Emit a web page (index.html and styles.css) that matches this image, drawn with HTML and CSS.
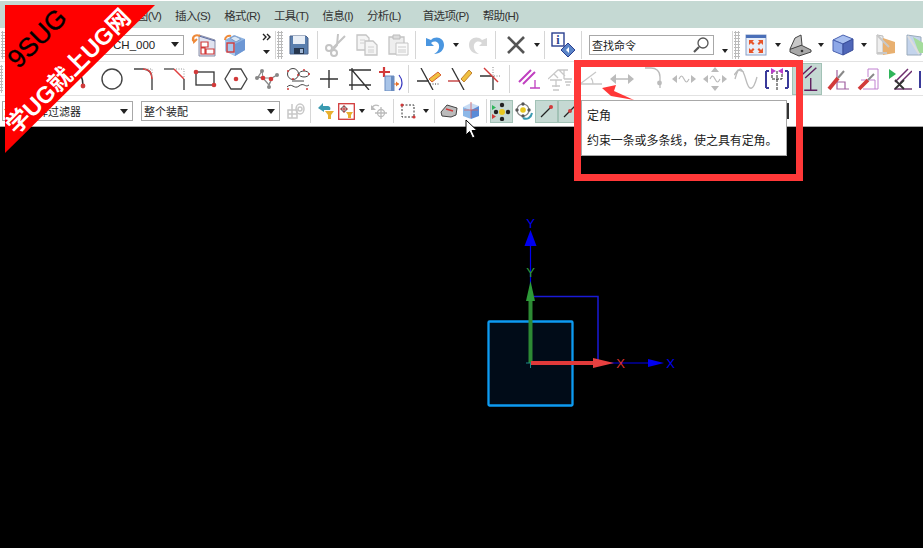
FILE: index.html
```html
<!DOCTYPE html>
<html lang="zh">
<head>
<meta charset="utf-8">
<title>NX</title>
<link rel="stylesheet" href="styles.css">
</head>
<body>
<div class="app">
  <nav class="menu">
    <span class="mi first">视图(V)</span>
    <span class="mi">插入(S)</span>
    <span class="mi">格式(R)</span>
    <span class="mi">工具(T)</span>
    <span class="mi">信息(I)</span>
    <span class="mi">分析(L)</span>
    <span class="mi wide">首选项(P)</span>
    <span class="mi">帮助(H)</span>
  </nav>

  <div class="tb r1">
    <i class="grip"></i>
    <div class="combo c-sketch"><span>SKETCH_000</span><b class="tri"></b></div>
    <span class="ic ml4"><svg width="26" height="24" viewBox="0 0 26 24"><path d="M8 2 24 7V23H8Z" fill="#dfe3f0" stroke="#8a8fa8"/><path d="M8 3 24 8" stroke="#5a6aa0"/><path d="M10 9h7v5h-7zM10 15h4v6h-4zM15 16h8v5h-8z" fill="#fff" stroke="#d23a3a" stroke-width="1.2"/><path d="M2 8C1 3 5 1 9 3M2 4l1 5 3-3" fill="none" stroke="#ee8a3a" stroke-width="2"/></svg></span>
    <span class="ic"><svg width="26" height="24" viewBox="0 0 26 24"><path d="M3 7 12 2l11 4v11l-10 6-10-5Z" fill="#8fb4e2"/><path d="M3 7l10 4 10-5v11l-10 6Z" fill="#6d97d4"/><path d="M13 11v12L3 18V7Z" fill="#a9c8ec"/><path d="M8 5l5-2 6 3-5 3Z" fill="#dbe7f5" stroke="#7d9cc8"/><rect x="5" y="10" width="7" height="9" fill="none" stroke="#d23a3a" stroke-width="1.4"/><path d="M3 7c0-3 3-5 6-4" fill="none" stroke="#ee8a3a" stroke-width="2"/></svg></span>
    <span class="chev ml10"><svg width="14" height="26" viewBox="0 0 14 26"><path d="M3 2l3 3-3 3M7 2l3 3-3 3" fill="none" stroke="#222" stroke-width="1.4"/><path d="M3 18h7l-3.500 4Z" fill="#222"/></svg></span>
    <i class="sep ml1"></i>
    <i class="grip g2"></i>
    <span class="ic"><svg width="22" height="22" viewBox="0 0 22 22"><path d="M2 2h16l2 2v16H2Z" fill="#5a7fae" stroke="#4a628a"/><path d="M5 2h12v8H5Z" fill="#e8eef6"/><path d="M6 14h10v6H6Z" fill="#26364e"/><rect x="12" y="15" width="3" height="4" fill="#9fb6d4"/></svg></span>
    <i class="sep ml3"></i>
    <span class="ic ml2"><svg width="26" height="24" viewBox="0 0 26 24"><g fill="none" stroke="#c4c4c4" stroke-width="2"><path d="M22 3 10 15M15 1 14 12l-4 5"/><circle cx="6" cy="15" r="3"/><circle cx="11" cy="20" r="3"/></g></svg></span>
    <span class="ic"><svg width="24" height="24" viewBox="0 0 24 24"><g fill="#f5f5f5" stroke="#c4c4c4" stroke-width="1.3"><path d="M2 2h9l3 3v12H2Z"/><path d="M10 8h8l4 4v10H10Z"/></g><path d="M5 7h5M5 10h4M13 14h6M13 17h6M13 19h6" stroke="#d0d0d0"/></svg></span>
    <span class="ic"><svg width="22" height="24" viewBox="0 0 22 24"><path d="M2 4h15v17H2Z" fill="#eee" stroke="#c4c4c4" stroke-width="1.300"/><path d="M6 2h7v4H6Z" fill="#ddd" stroke="#bbb"/><path d="M9 10h12v12H9Z" fill="#fafafa" stroke="#c4c4c4"/><path d="M11 14h8M11 17h8M11 19h8" stroke="#ccc"/></svg></span>
    <i class="sep ml2"></i>
    <span class="ic ml3"><svg width="22" height="22" viewBox="0 0 22 22"><path d="M2 4v8h8L7 9c4-3 9-1 8 5-.5 3-3 5-5 6 6 0 10-4 10-9 0-7-8-10-13-5Z" fill="#4a96e0"/></svg></span>
    <span class="dd"></span>
    <span class="ic"><svg width="22" height="22" viewBox="0 0 22 22"><path d="M20 4v8h-8l3-3c-4-3-9-1-8 5 .5 3 3 5 5 6-6 0-10-4-10-9C2 4 10 1 15 6Z" fill="#d8d8d8"/></svg></span>
    <i class="sep ml2"></i>
    <span class="ic ml4"><svg width="20" height="18" viewBox="0 0 20 18"><path d="M2 1l16 16M18 1 2 17" stroke="#555" stroke-width="2.600"/></svg></span>
    <span class="dd"></span>
    <i class="sep ml1"></i>
    <span class="ic ml2"><svg width="26" height="26" viewBox="0 0 26 26"><rect x="2" y="1" width="12" height="13" fill="#fff" stroke="#2a3f8f" stroke-width="1.400"/><text x="8" y="12" class="glyph-i">i</text><path d="M18 11l7 7-7 7-7-7Z" fill="#5a84c8" stroke="#2a3f8f"/><path d="M16 18l3-3v6Z" fill="#fff"/></svg></span>
    <i class="sep ml3"></i>
    <div class="search ml7"><span>查找命令</span><svg width="18" height="18" viewBox="0 0 18 18"><circle cx="11" cy="7" r="5" fill="#fff" stroke="#555" stroke-width="1.300"/><path d="M7 11 2 16" stroke="#555" stroke-width="2.200"/></svg></div>
    <span class="dd ml5 low"></span>
    <i class="sep ml1"></i>
    <i class="grip g2"></i>
    <span class="ic"><svg width="22" height="22" viewBox="0 0 22 22"><rect x="1" y="1" width="20" height="20" fill="#e8eef8" stroke="#8aa0c8"/><rect x="1" y="1" width="20" height="3" fill="#4a6fb8"/><path d="M4 6h5L7.500 7.500 9.500 9.500 8 11 6 9 4 11ZM18 6h-5l1.500 1.500-2 2L14 11l2-2 2 2ZM4 19h5l-1.500-1.500 2-2L8 14l-2 2-2-2ZM18 19h-5l1.500-1.500-2-2L14 14l2 2 2-2Z" fill="#e8552a"/></svg></span>
    <span class="dd ml1"></span>
    <span class="ic"><svg width="24" height="24" viewBox="0 0 24 24"><path d="M2 16 13 12l10 5v2L11 23 2 19Z" fill="#a8a8a8" stroke="#444"/><path d="M2 16 7 5l6-3 1 10L3 16Z" fill="#c8c8c8" stroke="#444"/><circle cx="14" cy="18" r="1.300" fill="#333"/></svg></span>
    <span class="dd"></span>
    <span class="ic"><svg width="24" height="22" viewBox="0 0 24 22"><path d="M2 6 12 1l10 4-10 5Z" fill="#a8bff0" stroke="#4a62b0"/><path d="M2 6l10 4v11L2 17Z" fill="#8ea8e8" stroke="#4a62b0"/><path d="M12 10l10-5v11l-10 5Z" fill="#4f66b8" stroke="#3a4c98"/></svg></span>
    <span class="dd"></span>
    <span class="ic"><svg width="22" height="24" viewBox="0 0 22 24"><path d="M2 2 8 3v18H2Z" fill="#eee" stroke="#bbb"/><path d="M8 5 20 9v11l-12 2Z" fill="#e8b070"/><path d="M2 2l12 12M2 20h10" stroke="#c8c8c8" stroke-width="2"/></svg></span>
    <span class="ic"><svg width="24" height="24" viewBox="0 0 24 24"><path d="M2 2 16 4v18H2Z" fill="#c4d4ec" stroke="#9ab"/><path d="M8 4l14 8v8H14Z" fill="#a4dc9c"/><path d="M3 3l11 18" stroke="#ddd" stroke-width="2"/></svg></span>
  </div>

  <div class="tb r2">
    <i class="grip"></i>
    <span class="ic"><svg width="22" height="22" viewBox="0 0 22 22"><path d="M2 20 20 2" stroke="#333" stroke-width="1.500"/></svg></span>
    <span class="ic"><svg width="22" height="22" viewBox="0 0 22 22"><path d="M2 20 20 2" stroke="#333" stroke-width="1.500"/></svg></span>
    <span class="ic"><svg width="20" height="24" viewBox="0 0 20 24"><path d="M4 3c5 2 8 8 8 16" fill="none" stroke="#333" stroke-width="1.500"/><circle cx="12" cy="19" r="2.400" fill="#d23a3a"/></svg></span>
    <span class="ic"><svg width="22" height="22" viewBox="0 0 22 22"><circle cx="11" cy="11" r="10" fill="none" stroke="#444" stroke-width="1.400"/></svg></span>
    <span class="ic"><svg width="22" height="24" viewBox="0 0 22 24"><path d="M2 2h9c6 0 9 4 9 10" fill="none" stroke="#444" stroke-width="1.300"/><path d="M11 2c6 0 9 4 9 10" fill="none" stroke="#e04040" stroke-width="1.400"/><path d="M20 12v11" stroke="#333" stroke-width="1.300"/><path d="M13 2h7v8" fill="none" stroke="#999" stroke-dasharray="1 1.500"/></svg></span>
    <span class="ic"><svg width="24" height="24" viewBox="0 0 24 24"><path d="M2 2h10" stroke="#444" stroke-width="1.300"/><path d="M12 2l10 10" stroke="#e04040" stroke-width="1.500"/><path d="M22 12v11" stroke="#333" stroke-width="1.300"/><path d="M14 2h8v8" fill="none" stroke="#999" stroke-dasharray="1 1.500"/></svg></span>
    <span class="ic"><svg width="24" height="22" viewBox="0 0 24 22"><rect x="3" y="4" width="18" height="13" fill="none" stroke="#333" stroke-width="1.300"/><circle cx="3" cy="4" r="2.300" fill="#d23a3a"/><circle cx="21" cy="17" r="2.300" fill="#d23a3a"/></svg></span>
    <span class="ic"><svg width="24" height="22" viewBox="0 0 24 22"><path d="M7 1h10l6 10-6 10H7L1 11Z" fill="none" stroke="#444" stroke-width="1.300"/><circle cx="12" cy="11" r="2.300" fill="#d23a3a"/></svg></span>
    <span class="ic"><svg width="24" height="22" viewBox="0 0 24 22"><path d="M7 3 3 9l5 1 6 7 3-7 5-3" fill="none" stroke="#888" stroke-width="1.300"/><path d="M7 3l1 7 9 0-3 7" fill="none" stroke="#888"/><circle cx="7" cy="3" r="2" fill="#888"/><circle cx="2" cy="10" r="2" fill="#888"/><circle cx="22" cy="7" r="2" fill="#888"/><circle cx="14" cy="19" r="2" fill="#888"/><circle cx="8" cy="10" r="2.300" fill="#d23a3a"/><circle cx="16" cy="11" r="2.300" fill="#d23a3a"/></svg></span>
    <span class="ic"><svg width="24" height="24" viewBox="0 0 24 24"><g fill="none" stroke="#444"><circle cx="7" cy="7" r="5.500"/><ellipse cx="18" cy="7" rx="5" ry="3"/><path d="M6 14h12M1 20c5-5 7 3 12-1s6 2 10-1"/></g><g fill="#d23a3a"><circle cx="2" cy="4" r="1"/><circle cx="12" cy="8" r="1"/><circle cx="7" cy="12" r="1"/><circle cx="18" cy="3" r="1"/><circle cx="23" cy="7" r="1"/><circle cx="2" cy="22" r="1"/><circle cx="21" cy="22" r="1"/></g></svg></span>
    <span class="ic"><svg width="18" height="18" viewBox="0 0 18 18"><path d="M0 9h18M9 0v18" stroke="#333" stroke-width="1.400"/></svg></span>
    <span class="ic"><svg width="22" height="22" viewBox="0 0 22 22"><path d="M0 2h22M0 17h22M3 0v22M3 2l17 20" stroke="#333" stroke-width="1.300" fill="none"/></svg></span>
    <span class="ic"><svg width="24" height="24" viewBox="0 0 24 24"><path d="M5 0v10M0 5h11" stroke="#d23a3a" stroke-width="2.200"/><path d="M6 9h9v15H6Z" fill="#a8c4e8" stroke="#6a8cc0"/><path d="M12 9h3v15h-3Z" fill="#6a8cc0"/><path d="M15 17h5" stroke="#e8712a"/><path d="M17 14.500l3 2.500-3 2.500Z" fill="#e8712a"/><path d="M20 8c4 5 4 11 0 15" fill="none" stroke="#3a3ac0" stroke-width="1.200"/></svg></span>
    <i class="sep r2s"></i>
    <span class="ic ml1"><svg width="24" height="22" viewBox="0 0 24 22"><path d="M4 0 16 22M0 13h12" stroke="#333" stroke-width="1.300"/><path d="M13 16h9" stroke="#333" stroke-dasharray="1 1.500"/><path d="M12 11l9-7 3 3-9 7Z" fill="#f0c040" stroke="#d86030"/></svg></span>
    <span class="ic"><svg width="24" height="22" viewBox="0 0 24 22"><path d="M4 0 16 22" stroke="#333" stroke-width="1.300"/><path d="M0 13h12" stroke="#c03030" stroke-width="1.300"/><path d="M13 11l8-9 3 3-8 9Z" fill="#f0c040" stroke="#c08030"/></svg></span>
    <span class="ic"><svg width="22" height="24" viewBox="0 0 22 24"><path d="M0 9h12M13 9v14" stroke="#333" stroke-width="1.300"/><path d="M4 1l14 14" stroke="#d23a3a" stroke-width="1.400"/><path d="M13 0v9h8" fill="none" stroke="#888" stroke-dasharray="1 1.500"/></svg></span>
    <i class="sep r2s wide"></i>
    <span class="ic"><svg width="22" height="20" viewBox="0 0 22 20"><path d="M1 13 13 1M5 15 17 3" stroke="#c040c0" stroke-width="2"/><path d="M12 19h10M17 11v8" stroke="#c040c0" stroke-width="1.300"/></svg></span>
    <span class="ic"><svg width="24" height="24" viewBox="0 0 24 24"><g fill="none" stroke="#c8c8c8" stroke-width="1.300"><path d="M0 12 10 3h10M11 3l6 6M6 7l4 4M16 3v9M2 13h12M5 23h6M8 13v7M4 19h8M16 12h8M17 15h6M18 18h4"/></g></svg></span>
    <span class="ic"><svg width="22" height="18" viewBox="0 0 22 18"><path d="M0 14 16 2M0 14h22M13 14c0-3-1-5-2-6" fill="none" stroke="#c8c8c8" stroke-width="1.300"/></svg></span>
    <span class="ic"><svg width="24" height="12" viewBox="0 0 24 12"><path d="M3 6h18" stroke="#bbb" stroke-width="1.500"/><path d="M0 6l6-5v10ZM24 6l-6-5v10Z" fill="#bbb"/></svg></span>
    <span class="ic"><svg width="18" height="24" viewBox="0 0 18 24"><path d="M1 1h6c5 0 9 3 9 9v11" fill="none" stroke="#bbb" stroke-width="1.300"/><circle cx="15.500" cy="16" r="2.400" fill="#bbb"/></svg></span>
    <span class="ic"><svg width="24" height="12" viewBox="0 0 24 12"><path d="M7 6c2-4 3-4 5 0s3 4 5 0" fill="none" stroke="#bbb" stroke-width="1.200"/><path d="M0 6l5-4v8ZM24 6l-5-4v8Z" fill="#bbb"/></svg></span>
    <span class="ic"><svg width="24" height="24" viewBox="0 0 24 24"><path d="M7 12c2-4 3-4 5 0s3 4 5 0" fill="none" stroke="#bbb" stroke-width="1.200"/><path d="M0 12l5-4v8ZM24 12l-5-4v8ZM12 0l-4 5h8ZM12 24l-4-5h8Z" fill="#bbb"/></svg></span>
    <span class="ic"><svg width="24" height="24" viewBox="0 0 24 24"><path d="M1 12c4-16 8-10 11 1s7 12 11-3M0 8l4-5 6 2" fill="none" stroke="#bbb" stroke-width="1.300"/></svg></span>
    <span class="ic"><svg width="24" height="22" viewBox="0 0 24 22"><path d="M1 3v17M23 3v17M1 3h3M1 20h3M23 3h-3M23 20h-3" stroke="#3a3a9a" stroke-width="2" fill="none"/><path d="M7 3v8h10V3M12 3v19" stroke="#222" fill="none" stroke-dasharray="3 1"/><path d="M11 3 6 0v6ZM13 3l5-3v6Z" fill="#b83ec8"/></svg></span>
    <span class="active a2"><svg width="30" height="30" viewBox="0 0 30 30"><path d="M8 12 20 1M13 14 25 3" stroke="#5e1e5e" stroke-width="1.500"/><path d="M12 27h14M19 14v13" stroke="#5e1e5e" stroke-width="1.500"/></svg></span>
    <span class="ic"><svg width="22" height="24" viewBox="0 0 22 24"><path d="M10 3v19H22M10 15h8v7" fill="none" stroke="#a060a0" stroke-width="1.200"/><path d="M2 22 11 11" stroke="#d23a3a" stroke-width="3.800"/><path d="M11 11l6-7" stroke="#888" stroke-width="2"/></svg></span>
    <span class="ic"><svg width="24" height="24" viewBox="0 0 24 24"><path d="M11 2h10v20H6M11 2v8M4 13h14v9" fill="none" stroke="#c080d0"/><path d="M2 22 11 13" stroke="#d23a3a" stroke-width="3.800"/><path d="M11 13l6-6" stroke="#888" stroke-width="2"/></svg></span>
    <span class="ic"><svg width="24" height="24" viewBox="0 0 24 24"><path d="M1 2l7 5-7 5Z" fill="#2fb55a"/><path d="M7 15 20 2M12 16 24 4" stroke="#6e2e6e" stroke-width="1.500"/><path d="M6 22h18" stroke="#5e1e5e" stroke-width="1.300"/><path d="M7 13l9 9M16 13l-9 9" stroke="#333" stroke-width="1.800"/></svg></span>
    <span class="ic"><svg width="24" height="22" viewBox="0 0 24 22"><path d="M1 3v17M23 3v17" stroke="#3a3a9a" stroke-width="2"/></svg></span>
  </div>

  <div class="tb r3">
    <div class="combo c-filter"><span>没有选择过滤器</span><b class="tri"></b></div>
    <div class="combo c-scope"><span>整个装配</span><b class="tri"></b></div>
    <span class="ic3 ml4"><svg width="18" height="18" viewBox="0 0 18 18"><g fill="none" stroke="#c8c8c8" stroke-width="1.500"><path d="M1 8h9v8H1ZM5 2v14M1 12h9"/><ellipse cx="13" cy="7" rx="4" ry="5"/><circle cx="13" cy="7" r="2"/></g></svg></span>
    <i class="sep ml3"></i>
    <span class="ic2 ml5"><svg width="18" height="18" viewBox="0 0 18 18"><path d="M1 6 6 1v3h4c3 0 4 2 3 4H7v2Z" fill="#3a9ab0"/><path d="M8 9h9l-3 4v4h-3v-4Z" fill="#e8b030"/></svg></span>
    <span class="ic2"><svg width="17" height="17" viewBox="0 0 17 17"><rect x=".7" y=".7" width="15.600" height="15.600" fill="#fff" stroke="#d23a3a" stroke-width="1.300"/><circle cx="6" cy="6" r="2.500" fill="none" stroke="#555"/><path d="M6 2v8M2 6h8" stroke="#c03030"/><path d="M8 9h7l-2 3v3h-3v-3Z" fill="#e8b030"/></svg></span>
    <span class="dd"></span>
    <span class="ic2 ml1"><svg width="18" height="18" viewBox="0 0 18 18"><g fill="none" stroke="#bbb" stroke-width="1.300"><circle cx="11" cy="11" r="3.500"/><path d="M11 5v12M5 11h12M2 7c0-3 3-5 7-3"/></g><path d="M1 3v5h5Z" fill="#bbb"/></svg></span>
    <i class="sep ml4"></i>
    <span class="ic2 ml4"><svg width="16" height="16" viewBox="0 0 16 16"><rect x="2" y="2" width="12" height="12" fill="none" stroke="#333" stroke-dasharray="2 1.500"/><circle cx="2" cy="2" r="1.600" fill="#d23a3a"/><circle cx="14" cy="14" r="1.600" fill="#d23a3a"/></svg></span>
    <span class="dd ml2"></span>
    <i class="sep ml2"></i>
    <span class="ic2 ml4"><svg width="18" height="14" viewBox="0 0 18 14"><path d="M1 8 7 1l10 3-1 7-5 2-9-1Z" fill="#bbb" stroke="#444"/><path d="M6 5l7 2" stroke="#d23a3a" stroke-width="1.400"/></svg></span>
    <span class="ic2 ml2"><svg width="18" height="18" viewBox="0 0 18 18"><path d="M1 5 9 1l8 3-8 4Z" fill="#c8dcf4"/><path d="M1 5l8 3v9l-8-3Z" fill="#8cb8e8"/><path d="M9 8l8-4v10l-8 3Z" fill="#5a8cd8"/><path d="M9 0v16M2 8h14" stroke="#d86060" stroke-width=".8"/></svg></span>
    <i class="sep ml5"></i>
    <span class="active a3 ml3"><svg width="19" height="19" viewBox="0 0 19 19"><circle cx="10" cy="10" r="3" fill="#e8c820"/><g fill="#222"><circle cx="10" cy="3" r="2.200"/><circle cx="10" cy="17" r="2.200"/><circle cx="4" cy="10" r="2.200"/><circle cx="16" cy="10" r="2.200"/></g><path d="M0 3l4 2.500L0 8Z" fill="#2fb55a"/><path d="M0 12l4 2.500L0 17Z" fill="#d23a3a"/></svg></span>
    <span class="ic4"><svg width="18" height="18" viewBox="0 0 18 18"><circle cx="8" cy="8" r="2.800" fill="#e8c820"/><circle cx="8" cy="8" r="6" fill="none" stroke="#888" stroke-width="1.200"/><g fill="#555"><circle cx="8" cy="2" r="1.700"/><circle cx="8" cy="14" r="1.700"/><circle cx="2" cy="8" r="1.700"/><circle cx="14" cy="8" r="1.700"/></g><path d="M8 16c4 2 8 0 9-5" fill="none" stroke="#3a9ab0" stroke-width="2"/></svg></span>
    <span class="active a3"><svg width="14" height="14" viewBox="0 0 14 14"><path d="M1 13 11 3" stroke="#222" stroke-width="1.200"/><circle cx="11" cy="3" r="2" fill="#d23a3a"/></svg></span>
    <span class="active a3"><svg width="14" height="14" viewBox="0 0 14 14"><path d="M1 13 13 1" stroke="#222" stroke-width="1.200"/><circle cx="7" cy="7" r="2" fill="#d23a3a"/></svg></span>
    <i class="tail"></i>
  </div>

  <main class="canvas">
    <svg class="scene" width="923" height="421" viewBox="0 127 923 421">
      <rect x="488.500" y="321.500" width="84" height="84" fill="#010c18" stroke="#0d9bf2" stroke-width="2.300" rx="1"/>
      <path d="M534 296.500H598V360" fill="none" stroke="#1a1ad6" stroke-width="1.500"/>
      <path d="M530.500 363V240" stroke="#0000f0" stroke-width="1.200"/>
      <path d="M530.500 230 524.500 246H536.500Z" fill="#0000f0"/>
      <path d="M595 363H650" stroke="#0000f0" stroke-width="1.200"/>
      <path d="M648 359 664 363 648 367Z" fill="#0000f0"/>
      <text x="530.500" y="228" class="ax blue">Y</text>
      <text x="670.500" y="368" class="ax blue">X</text>
      <path d="M530.500 363V295" stroke="#2d8a34" stroke-width="4"/>
      <path d="M530.500 281 526 301H535Z" fill="#2d9a38"/>
      <text x="530.500" y="277" class="ax green">Y</text>
      <path d="M531 363H595" stroke="#e03a3a" stroke-width="4"/>
      <path d="M593 358 614 363 593 368Z" fill="#e84040"/>
      <text x="620.500" y="368" class="ax red">X</text>
      <path d="M526 363h5M530.500 363v5" stroke="#1a8a8a"/>
    </svg>
  </main>
</div>

<svg class="cursor" width="14" height="20" viewBox="0 0 14 20"><path d="M1 1V16L4.500 12.500 7.500 19 10 18 7 11.500H12Z" fill="#fff" stroke="#000"/></svg>

<div class="frame"></div>
<div class="tip">
  <p>定角</p>
  <p>约束一条或多条线，使之具有定角。</p>
</div>
<svg class="pointer" width="34" height="18" viewBox="0 0 34 18"><path d="M1 3 15 0 13 6 33 15 10 11Z" fill="#ff3838"/></svg>

<div class="banner">
  <span class="b-top">9SUG</span>
  <span class="b-main">学UG就上UG网</span>
</div>
</body>
</html>
```

FILE: styles.css
```css
* { box-sizing: border-box; }
html, body { margin: 0; height: 100%; overflow: hidden; }
body {
  background: #fff;
  font-family: "Liberation Sans", "Noto Sans CJK SC", sans-serif;
  font-size: 12px;
  color: #222;
}
.app { width: 923px; height: 548px; display: flex; flex-direction: column; padding-top: 1px; overflow: hidden; }

.menu {
  height: 27px;
  flex: none;
  background: #c5d9d3;
  display: flex;
  align-items: center;
  gap: 14px;
  padding-left: 126px;
  font-size: 11.5px;
  letter-spacing: -.65px;
  color: #333;
}
.mi { white-space: nowrap; }
.mi.wide { margin-left: 8px; }

.tb { display: flex; align-items: center; flex: none; background: #fff; overflow: hidden; }
.r1 { height: 34px; border-bottom: 1px solid #e2e2e2; }
.r2 { height: 34px; border-bottom: 1px solid #e2e2e2; padding-left: 0; }
.r3 { height: 31px; border-bottom: 1px solid #a8a8a8; padding-left: 2px; }

.ic, .ic2, .ic3, .ic4, .chev, .active { display: flex; align-items: center; justify-content: center; flex: none; }
.ic { width: 31px; }
.ic2 { width: 20px; }
.ic3 { width: 23px; }
.ic4 { width: 22px; }
.chev { width: 14px; }
.active { background: #c5d9d3; border: 1px solid #a2c2b6; }
.a2 { width: 30px; height: 32px; }
.a3 { width: 23px; height: 23px; }

.grip {
  width: 5px; height: 28px; flex: none; margin-left: 1px;
  background: radial-gradient(circle, #bbb 1px, transparent 1.2px) 0 0 / 3px 3px;
}
.r2 > .grip { width: 3px; margin-left: 0; margin-right: 0; }
.g2 { margin-left: 1px; width: 6px; }

.sep { width: 1px; height: 28px; flex: none; background: #d6d6d6; }
.r2s { margin-left: 2px; margin-right: 3px; }
.r2s.wide { margin-left: 3px; margin-right: 3px; }
.r3 .sep { height: 24px; }

.dd { width: 12px; flex: none; height: 4px; position: relative; }
.dd::after {
  content: ""; display: block; margin: 0 auto; width: 0; height: 0;
  border-left: 3.5px solid transparent; border-right: 3.5px solid transparent; border-top: 4px solid #222;
}
.dd.low { top: 6px; }

.ml1 { margin-left: 1px; } .ml2 { margin-left: 2px; } .ml3 { margin-left: 3px; }
.ml4 { margin-left: 4px; } .ml5 { margin-left: 5px; } .ml7 { margin-left: 7px; }
.ml10 { margin-left: 10px; }

.combo, .search {
  height: 20px; flex: none; display: flex; align-items: center; justify-content: space-between;
  background: #fff; border: 1px solid #a8a8a8; padding: 0 3px 0 2px; white-space: nowrap; overflow: hidden;
  font-size: 11px;
}
.tri { width: 0; height: 0; border-left: 4px solid transparent; border-right: 4px solid transparent; border-top: 5px solid #222; flex: none; margin-right: 1px; }
.c-sketch { width: 105px; margin-left: 73px; font-size: 11.500px; padding-left: 3px; }
.c-filter { width: 131px; padding-left: 1px; }
.c-scope { width: 139px; margin-left: 8px; }
.search { width: 125px; }

.glyph-i { font: bold 12px "Liberation Serif", serif; fill: #2a3f8f; text-anchor: middle; }

.tail { width: 3px; height: 16px; flex: none; margin-left: 205px; background: #333; }

.canvas { flex: 1; background: #000; min-height: 0; }
.scene { display: block; }
.ax { font: 13px "Liberation Sans", sans-serif; text-anchor: middle; }
.blue { fill: #0000f0; } .green { fill: #2d9a38; } .red { fill: #d83030; }

.cursor { position: absolute; left: 465px; top: 119px; }
.frame { position: absolute; left: 574px; top: 60px; width: 229px; height: 121px; border: 7px solid #ff3838; }
.tip {
  position: absolute; left: 581px; top: 100px; width: 206px; height: 56px;
  background: #fff; border: 1px solid #a8a8a8; padding: 6px 5px 0; color: #222; letter-spacing: -.1px;
}
.tip p { margin: 0 0 6px; line-height: 19px; white-space: nowrap; }
.pointer { position: absolute; left: 601px; top: 85px; }

.banner { position: absolute; left: 5px; top: 5px; width: 150px; height: 148px; }
.banner::before {
  content: ""; position: absolute; inset: 0;
  background: #f00; clip-path: polygon(0 0, 100% 0, 0 100%);
}
.b-top, .b-main {
  position: absolute; white-space: nowrap; transform: translate(-50%, -50%) rotate(-45deg);
  font-family: "Liberation Sans", "Noto Sans CJK SC", sans-serif; line-height: 1;
}
.b-top { left: 32px; top: 33px; font-size: 26px; color: #000; -webkit-text-stroke: .4px #000; }
.b-main { left: 64px; top: 67px; font-size: 23.500px; font-weight: bold; color: #fff; }
```
